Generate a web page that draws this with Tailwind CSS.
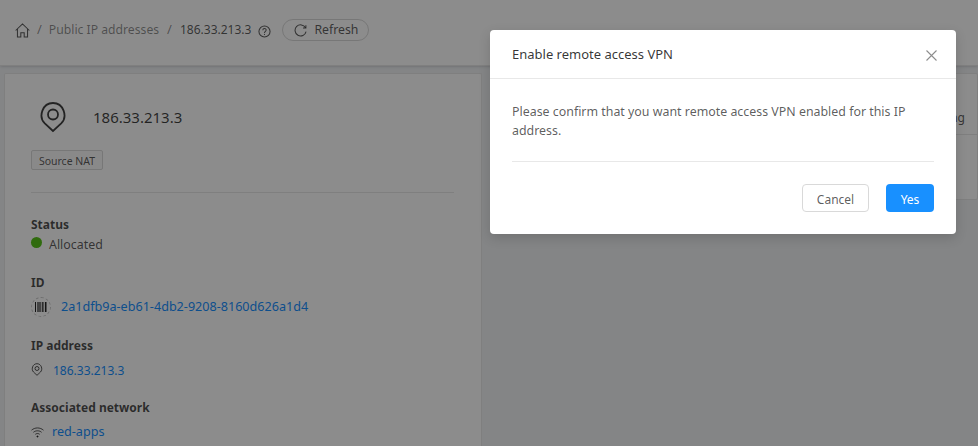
<!DOCTYPE html>
<html lang="en">
<head>
  <meta charset="UTF-8" />
  <title>Public IP addresses</title>
  <script src="https://cdn.jsdelivr.net/npm/@tailwindcss/browser@4"></script>
</head>
<body class="relative h-[446px] w-[978px] overflow-hidden bg-[#f0f2f5] font-['Noto_Sans',sans-serif] text-[12px] text-black/65">

  <!-- page underneath -->
  <header class="flex h-[66px] items-center border-b border-[#e8e8e8] bg-white pb-[5px] pl-[15px] shadow-sm">
    <svg class="h-[15px] w-[15px] text-black/65" viewBox="0 0 16 16" fill="none" stroke="currentColor" stroke-width="1.1"><path d="M.7 8 8 1l7.3 7M2.6 6.5V15h3.6v-4.600h3.600V15h3.600V6.500"/></svg>
    <span class="ml-[7px] text-[13px] text-black/45">/</span>
    <span class="ml-[7px] text-[12.2px] text-black/45">Public IP addresses</span>
    <span class="ml-[8px] text-[13px] text-black/45">/</span>
    <span class="ml-[8px] text-[12px] text-black/65">186.33.213.3</span>
    <svg class="ml-[7px] mt-[2px] h-[13px] w-[13px]" viewBox="0 0 14 14" fill="none" stroke="currentColor" stroke-width="1.1"><circle cx="7" cy="7" r="6"/><path d="M5.2 5.6c0-2.3 3.6-2.3 3.6-.1 0 1.400-1.800 1.300-1.800 3"/><path d="M7 9.600v1.100"/></svg>
    <button class="ml-[11px] flex h-[22px] w-[87px] items-center rounded-full border border-[#d9d9d9] bg-white pl-[11px] text-[12.3px] text-black/65">
      <svg class="h-[13px] w-[13px]" viewBox="0 0 14 14" fill="none" stroke="currentColor" stroke-width="1.1"><path d="M12.400 4A6 6 0 1 0 13 8.200"/><path d="M12.800 1.300V4.400H9.700"/></svg>
      <span class="ml-[7px]">Refresh</span>
    </button>
  </header>

  <main class="flex gap-[8px] pl-[4px] pt-[7px]">
    <section class="h-[373px] w-[478px] shrink-0 overflow-hidden rounded-t-[2px] border border-b-0 border-[#e8e8e8] bg-white px-[26px]">
      <div class="flex items-center pt-[27px]">
        <svg class="ml-[8px] h-[32px] w-[28px] text-black/75" viewBox="0 0 28 32" fill="none" stroke="currentColor" stroke-width="1.800"><path d="M14 30 5.800 22.400C-1 15.600 3.500 2 14 2s15 13.600 8.200 20.400Z"/><circle cx="14" cy="13.500" r="5"/></svg>
        <span class="ml-[26px] text-[15px] text-black/75">186.33.213.3</span>
      </div>
      <span class="mt-[17px] block h-[20px] w-[72px] rounded-[2px] border border-[#d9d9d9] bg-[#fafafa] text-center text-[10.500px] leading-[20px]">Source NAT</span>
      <div class="mt-[22px] h-px w-[423px] bg-[#e8e8e8]"></div>
      <dl class="mt-[23px]">
        <dt class="text-[12px] leading-[18px] font-bold text-black/70">Status</dt>
        <dd class="flex h-[20px] items-center">
          <span class="-mt-[3px] h-[11px] w-[11px] rounded-full bg-[#58c41a]"></span>
          <span class="ml-[7px] mt-[2px] text-[12.400px]">Allocated</span>
        </dd>
        <dt class="mt-[20px] text-[12px] leading-[18px] font-bold text-black/70">ID</dt>
        <dd class="mt-[5px] flex h-[20px] items-center">
          <span class="flex h-[20px] w-[20px] items-center justify-center rounded-full border border-dashed border-[#c8c8c8]">
            <svg class="h-[10px] w-[12px] text-black/85" viewBox="0 0 12 10" fill="currentColor"><path d="M0 0h1v10H0zM2 0h.6v10H2zM3.400 0h1.200v10H3.400zM5.400 0H6v10h-.6zM6.800 0h1v10h-1zM8.500 0h.6v10h-.6zM10 0h1.500v10H10z"/></svg>
          </span>
          <a class="ml-[10px] mt-[1px] text-[12.600px] text-[#1890ff]">2a1dfb9a-eb61-4db2-9208-8160d626a1d4</a>
        </dd>
        <dt class="mt-[20px] text-[12px] leading-[18px] font-bold text-black/70">IP address</dt>
        <dd class="mt-[6px] flex h-[18px] items-center">
          <svg class="-mt-[2px] h-[13px] w-[12px]" viewBox="0 0 12 13" fill="none" stroke="currentColor" stroke-width="1"><path d="M6 12.300 2.500 9C-.2 6.300 1.700.7 6 .7s6.200 5.600 3.500 8.300Z"/><circle cx="6" cy="5.500" r="2"/></svg>
          <a class="ml-[10px] mt-[1px] text-[#1890ff]">186.33.213.3</a>
        </dd>
        <dt class="mt-[20px] text-[12px] leading-[18px] font-bold text-black/70">Associated network</dt>
        <dd class="mt-[6px] flex h-[18px] items-center">
          <svg class="h-[11px] w-[13px]" viewBox="0 0 13 11" fill="none" stroke="currentColor" stroke-width="1"><path d="M.5 3.200c3.400-3 8.600-3 12 0M2.400 5.300c2.300-2 5.900-2 8.200 0M4.300 7.300c1.200-1 3.200-1 4.400 0"/><circle cx="6.500" cy="9.500" r=".6" fill="currentColor"/></svg>
          <a class="ml-[8px] text-[12.600px] text-[#1890ff]">red-apps</a>
        </dd>
      </dl>
    </section>
    <section class="h-[127px] min-w-0 flex-1 rounded-[2px] border border-[#e8e8e8] bg-white">
      <div class="flex h-[61px] items-end justify-end border-b border-[#e8e8e8] pb-[7px] pr-[12px] text-[12px]">Loading</div>
    </section>
  </main>

  <!-- dimmed mask over the page -->
  <div class="absolute inset-0 bg-black/45"></div>

  <!-- modal -->
  <div class="absolute left-[490px] top-[30px] h-[204px] w-[466px] rounded-[4px] bg-white shadow-[0_4px_12px_rgba(0,0,0,0.15)]">
    <div class="flex h-[49px] items-center justify-between border-b border-[#e8e8e8] pl-[22px] pr-[19px]">
      <h2 class="mt-[1px] text-[13px] text-black/80">Enable remote access VPN</h2>
      <svg class="mt-[2px] h-[11px] w-[11px] text-black/45" viewBox="0 0 11 11" fill="none" stroke="currentColor" stroke-width="1.1"><path d="M.5.500l10 10M10.500.500l-10 10"/></svg>
    </div>
    <div class="px-[22px] pt-[23px]">
      <p class="text-[12.400px] leading-[19px] text-black/65">Please confirm that you want remote access VPN enabled for this IP address.</p>
      <div class="mt-[21px] h-px bg-[#e8e8e8]"></div>
      <div class="mt-[22px] flex justify-end gap-[17px]">
        <button class="h-[28px] w-[67px] rounded-[4px] border border-[#d9d9d9] bg-white pt-[3px] text-[12px] text-black/65">Cancel</button>
        <button class="h-[28px] w-[48px] rounded-[4px] bg-[#1890ff] pt-[3px] text-[12px] text-white">Yes</button>
      </div>
    </div>
  </div>
</body>
</html>
